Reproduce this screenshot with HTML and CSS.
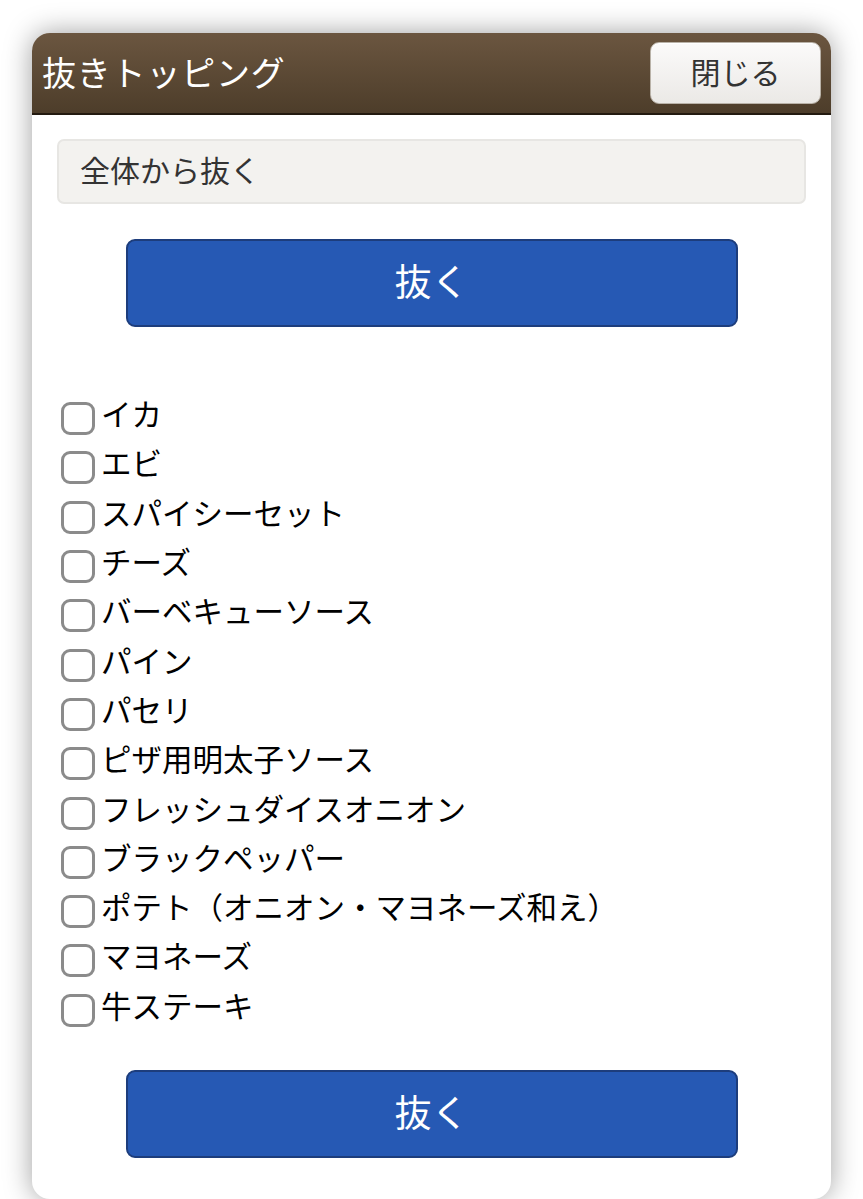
FILE: index.html
```html
<!DOCTYPE html>
<html lang="ja">
<head>
<meta charset="utf-8">
<link rel="stylesheet" href="styles.css">
</head>
<body>
<div class="dialog">
  <div class="header">
    <div class="title">抜きトッピング</div>
    <button class="close">閉じる</button>
  </div>
  <div class="content">
    <div class="scope">全体から抜く</div>
    <button class="action">抜く</button>
    <ul class="list">
      <li class="row"><input type="checkbox" class="cb"><span>イカ</span></li>
      <li class="row"><input type="checkbox" class="cb"><span>エビ</span></li>
      <li class="row"><input type="checkbox" class="cb"><span>スパイシーセット</span></li>
      <li class="row"><input type="checkbox" class="cb"><span>チーズ</span></li>
      <li class="row"><input type="checkbox" class="cb"><span>バーベキューソース</span></li>
      <li class="row"><input type="checkbox" class="cb"><span>パイン</span></li>
      <li class="row"><input type="checkbox" class="cb"><span>パセリ</span></li>
      <li class="row"><input type="checkbox" class="cb"><span>ピザ用明太子ソース</span></li>
      <li class="row"><input type="checkbox" class="cb"><span>フレッシュダイスオニオン</span></li>
      <li class="row"><input type="checkbox" class="cb"><span>ブラックペッパー</span></li>
      <li class="row"><input type="checkbox" class="cb"><span>ポテト（オニオン・マヨネーズ和え）</span></li>
      <li class="row"><input type="checkbox" class="cb"><span>マヨネーズ</span></li>
      <li class="row"><input type="checkbox" class="cb"><span>牛ステーキ</span></li>
    </ul>
    <button class="action">抜く</button>
  </div>
</div>
</body>
</html>
```
FILE: styles.css
```css
html, body {
  margin: 0;
  padding: 0;
  background: #ffffff;
  overflow: hidden;
}
body {
  font-family: "Noto Sans CJK JP", "Noto Sans", sans-serif;
  padding-top: 33px;
  height: 1199px;
  box-sizing: border-box;
}
.dialog {
  margin-left: 32px;
  width: 799px;
  border-radius: 18px;
  background: #ffffff;
  box-shadow: 0 0 28px rgba(0, 0, 0, 0.38);
  overflow: hidden;
}
.header {
  height: 80px;
  background: linear-gradient(#6b5640, #4d3d2a);
  border-bottom: 2px solid #231a10;
  display: flex;
  align-items: center;
  justify-content: space-between;
  padding: 0 10px 0 10px;
}
.title {
  color: #ffffff;
  font-size: 34px;
  letter-spacing: 0.8px;
  padding-bottom: 4px;
}
.close {
  width: 171px;
  height: 62px;
  border: 1px solid #b9b2a8;
  border-radius: 9px;
  background: linear-gradient(#fbfafa, #ebe9e6);
  color: #333333;
  font-family: inherit;
  font-size: 30px;
  padding: 0 0 4px 0;
  box-shadow: inset 0 1px 0 #ffffff;
}
.content {
  padding: 24px 25px 41px 25px;
  display: flex;
  flex-direction: column;
}
.scope {
  height: 61px;
  background: #f3f2ef;
  border: 2px solid #e7e6e3;
  border-radius: 7px;
  font-size: 30px;
  color: #333333;
  display: flex;
  align-items: center;
  padding: 0 0 6px 21px;
  box-sizing: border-box;
  height: 65px;
}
.action {
  align-self: center;
  width: 612px;
  height: 88px;
  margin-top: 35px;
  background: #2659b4;
  border: 2px solid #1d3d7c;
  border-radius: 9px;
  color: #ffffff;
  font-family: inherit;
  font-size: 37px;
  padding: 0 0 6px 0;
}
.list {
  list-style: none;
  margin: 63px 0 0 0;
  padding: 0;
}
.list + .action {
  margin-top: 39px;
}
.row {
  height: 49.3px;
  display: flex;
  align-items: center;
  font-size: 30.5px;
  color: #000000;
}
.row span {
  padding-bottom: 3px;
}
.cb {
  appearance: none;
  -webkit-appearance: none;
  width: 34px;
  height: 33px;
  box-sizing: border-box;
  border: 3px solid #8b8b8b;
  border-radius: 9px;
  margin: 8px 6px 0 4px;
  background: #ffffff;
  flex: none;
}
```
